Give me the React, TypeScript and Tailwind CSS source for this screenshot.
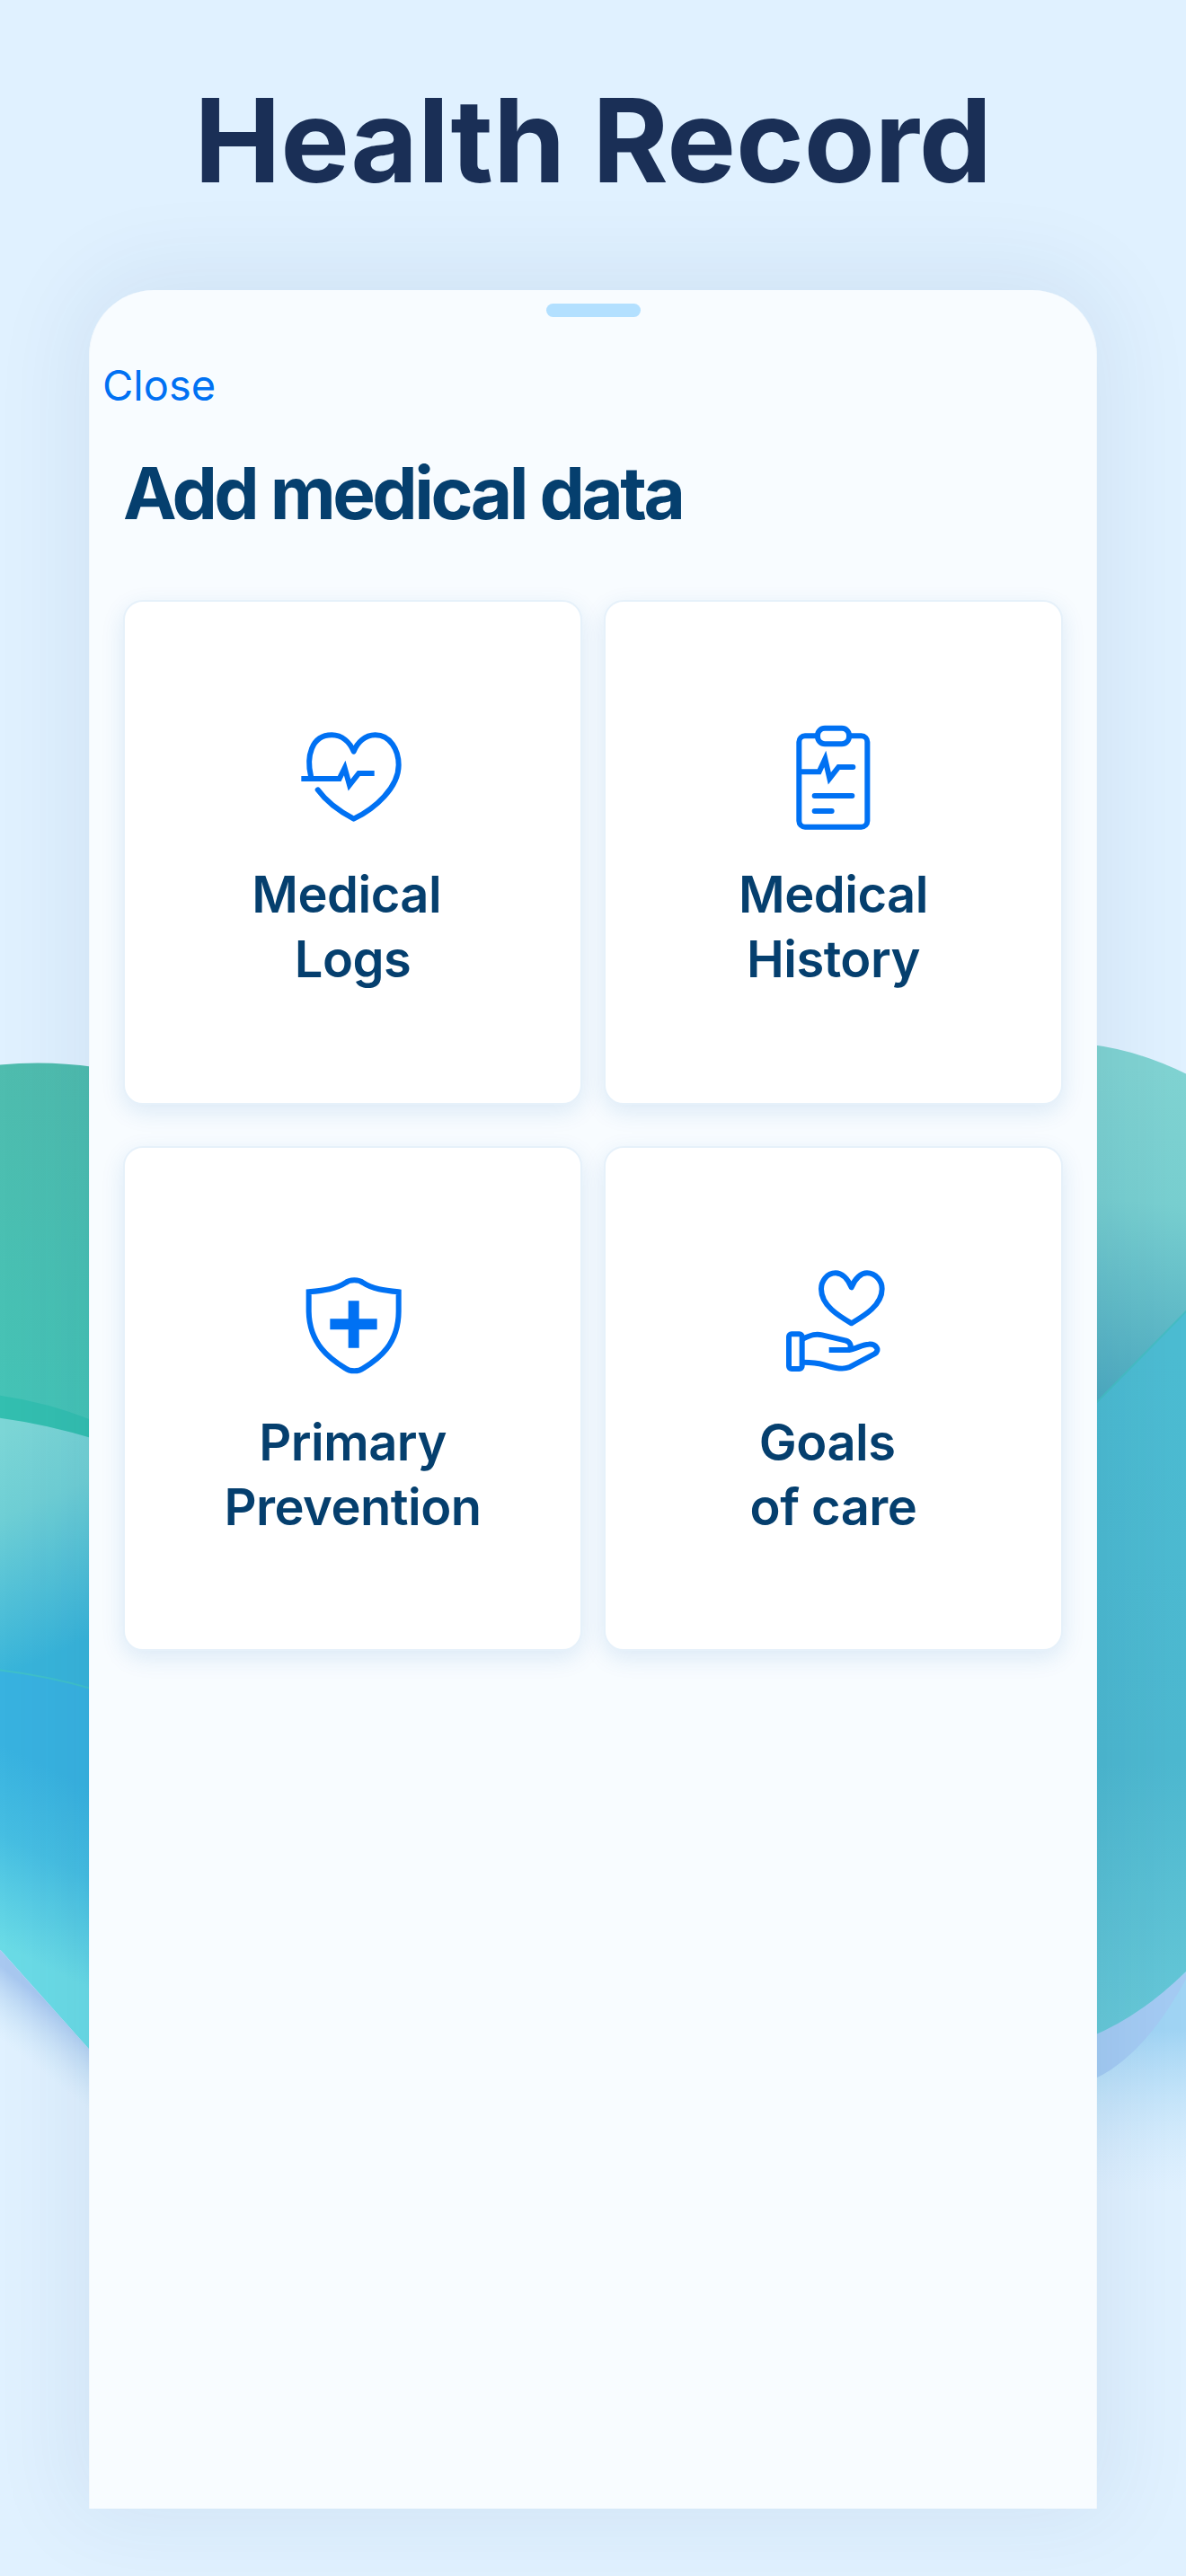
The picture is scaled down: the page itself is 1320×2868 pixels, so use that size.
import React from "react";

const blue = "#0071f3";

function HeartPulse() {
  return (
    <svg viewBox="0 0 600 480" className="w-[200px] h-[160px] ml-[16px]" fill="none" stroke={blue} strokeWidth={18}>
      <path strokeLinecap="round" strokeLinejoin="round" d="M135 252C120 190 135 115 205 115C240 115 265 140 278 170C290 140 315 115 350 115C400 115 428 165 428 215C428 290 350 360 278 395C230 370 185 335 158 298" />
      <path d="M103 261H230L248 225L264 282L295 243H347" />
    </svg>
  );
}

function Clipboard() {
  return (
    <svg viewBox="0 0 420 480" className="w-[140px] h-[160px] ml-[5px]" fill="none" stroke={blue} strokeWidth={18}>
      <rect x="88" y="118" width="228" height="304" rx="20" />
      <rect x="150" y="92" width="105" height="53" rx="24" fill="#fff" />
      <path d="M95 238H155L175 195L190 260L220 222H268" strokeLinecap="round" />
      <path d="M140 318H265M140 369H197" strokeLinecap="round" />
    </svg>
  );
}

function Shield() {
  return (
    <svg viewBox="0 0 420 450" className="w-[140px] h-[150px] mr-[4px]" fill="none" stroke={blue} strokeWidth={18}>
      <path d="M68 115C120 110 160 105 190 85C205 73 235 73 250 85C280 105 320 110 368 115V180C368 290 300 340 250 370C235 382 205 382 190 370C140 340 70 290 68 180Z" />
      <path d="M200 145H236V205H296V241H236V302H200V241H139V205H200Z" fill={blue} stroke="none" />
    </svg>
  );
}

function HandHeart() {
  return (
    <svg viewBox="0 0 480 450" className="w-[160px] h-[150px] ml-[5px]" fill="none" stroke={blue} strokeWidth={18} strokeLinejoin="round">
      <path d="M293 100C280 70 260 52 240 52C210 52 192 80 192 105C192 160 250 195 293 220C335 195 395 160 395 105C395 80 375 52 345 52C325 52 305 70 293 100Z" />
      <rect x="84" y="256" width="44" height="116" rx="9" />
      <path d="M130 272C160 258 175 254 195 259L275 278C290 283 295 298 285 309H218M285 309C310 305 330 290 350 290C375 288 390 310 370 322L285 367C265 375 235 370 200 358C175 350 160 350 130 350" />
    </svg>
  );
}

function Card({ pt, icon, label }: { pt: string; icon: React.ReactNode; label: string }) {
  return (
    <div className={`flex flex-col items-center h-[562px] rounded-[22px] bg-white border-2 border-[#e6f1fa] shadow-[0_8px_26px_rgba(20,100,180,0.12)] ${pt}`}>
      {icon}
      <div className="mt-[20px] text-center whitespace-pre text-[56px] leading-[72px] font-semibold tracking-[-0.5px] text-[#053f6e]">{label}</div>
    </div>
  );
}

function Blobs() {
  return (
    <svg viewBox="0 0 1320 2868" className="absolute inset-0 w-[1320px] h-[2868px]">
      <defs>
        <linearGradient id="a" gradientUnits="userSpaceOnUse" x1="50" y1="1180" x2="50" y2="1600">
          <stop offset="0" stopColor="#4fbcae" />
          <stop offset="1" stopColor="#44c4b7" />
        </linearGradient>
        <linearGradient id="b" gradientUnits="userSpaceOnUse" x1="10" y1="1590" x2="110" y2="1820">
          <stop offset="0" stopColor="#7cd6d6" />
          <stop offset="0.35" stopColor="#6fcfd5" />
          <stop offset="1" stopColor="#38b4da" />
        </linearGradient>
        <linearGradient id="c" gradientUnits="userSpaceOnUse" x1="99" y1="1990" x2="10" y2="2170">
          <stop offset="0" stopColor="#38b2e0" />
          <stop offset="0.45" stopColor="#46bee2" />
          <stop offset="1" stopColor="#6adbe6" />
        </linearGradient>
        <linearGradient id="d" gradientUnits="userSpaceOnUse" x1="65" y1="2240" x2="25" y2="2290">
          <stop offset="0" stopColor="#a8c8f0" />
          <stop offset="1" stopColor="#c8e6f6" stopOpacity="0" />
        </linearGradient>
        <linearGradient id="e" gradientUnits="userSpaceOnUse" x1="1290" y1="1190" x2="1250" y2="1560">
          <stop offset="0" stopColor="#80d3d2" />
          <stop offset="0.4" stopColor="#78cfd0" />
          <stop offset="1" stopColor="#4eabc1" />
        </linearGradient>
        <linearGradient id="f" gradientUnits="userSpaceOnUse" x1="1270" y1="1500" x2="1300" y2="2270">
          <stop offset="0" stopColor="#4cbcd2" />
          <stop offset="0.6" stopColor="#4db8d0" />
          <stop offset="1" stopColor="#68c9d8" />
        </linearGradient>
        <linearGradient id="g" gradientUnits="userSpaceOnUse" x1="1270" y1="2260" x2="1270" y2="2440">
          <stop offset="0" stopColor="#a0d4f4" />
          <stop offset="1" stopColor="#c8e6fa" stopOpacity="0" />
        </linearGradient>
      </defs>
      <path d="M-5 1186Q50 1180 105 1188V1620H-5Z" fill="url(#a)" />
      <path d="M-5 1553Q50 1560 105 1582V1700H-5Z" fill="#33bfb0" />
      <path d="M-5 1578Q50 1585 105 1602V1890H-5Z" fill="url(#b)" />
      <path d="M-5 1859Q50 1865 105 1881V2288L-5 2165Z" fill="url(#c)" />
      <path d="M-5 1859Q50 1865 105 1881" fill="none" stroke="#3fc0cb" strokeWidth="2" />
      <path d="M-5 2165L105 2288V2480L-5 2400Z" fill="url(#d)" />
      <path d="M1215 1163Q1270 1170 1325 1198V1600H1215Z" fill="url(#e)" />
      <path d="M1215 2255L1325 2190V2520H1215Z" fill="url(#g)" />
      <path d="M1215 2316Q1275 2290 1325 2194L1215 2260Z" fill="#a4cbf3" />
      <path d="M1215 1567L1325 1455V2190Q1270 2245 1215 2267Z" fill="url(#f)" />
      <path d="M1215 1567L1325 1455" fill="none" stroke="#45bcc4" strokeWidth="2" />
    </svg>
  );
}

export default function App() {
  return (
    <div className="relative w-[1320px] h-[2868px] overflow-hidden bg-[#e0f1ff] font-['Inter',sans-serif]">
      <Blobs />
      <div className="relative flex flex-col">
        <h1 className="h-[323px] pt-[78px] text-center text-[129px] leading-[156px] font-[750] tracking-[-0.2px] text-[#1a2f56]">Health Record</h1>
        <div className="mx-[99px] h-[2470px] rounded-t-[72px] bg-[#f8fcff] border-x border-[#f1f7fc] shadow-[0_-6px_100px_14px_rgba(10,60,110,0.075)]">
          <div className="mx-auto mt-[15px] w-[105px] h-[15px] rounded-full bg-[#b3e0ff]" />
          <div className="ml-[14px] mt-[47px] text-[47px] leading-[58px] text-[#0071f3]">Close</div>
          <div className="ml-[37px] mt-[42px] text-[80px] leading-[97px] font-[750] tracking-[-3.5px] text-[#053f6e]">Add medical data</div>
          <div className="mx-[37px] mt-[71px] grid grid-cols-2 gap-x-[24px] gap-y-[46px]">
            <Card pt="pt-[110px]" icon={<HeartPulse />} label={"Medical \nLogs"} />
            <Card pt="pt-[110px]" icon={<Clipboard />} label={"Medical\nHistory"} />
            <Card pt="pt-[122px]" icon={<Shield />} label={"Primary\nPrevention"} />
            <Card pt="pt-[122px]" icon={<HandHeart />} label={"Goals \nof care"} />
          </div>
        </div>
      </div>
    </div>
  );
}
